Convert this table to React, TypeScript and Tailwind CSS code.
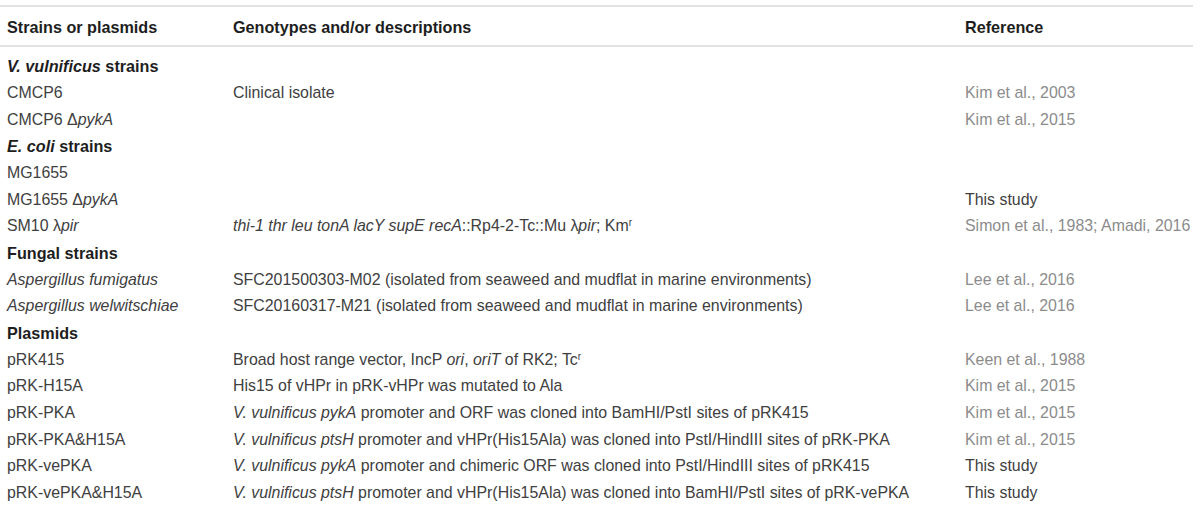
import type { ReactNode } from 'react';

type Row =
  | { kind: 'group'; label: ReactNode }
  | { kind: 'item'; name: ReactNode; desc?: ReactNode; ref?: string; refDark?: boolean };

const ROWS: Row[] = [
  { kind: 'group', label: <><i>V. vulnificus</i> strains</> },
  { kind: 'item', name: 'CMCP6', desc: 'Clinical isolate', ref: 'Kim et al., 2003' },
  { kind: 'item', name: <>CMCP6 Δ<i>pykA</i></>, ref: 'Kim et al., 2015' },
  { kind: 'group', label: <><i>E. coli</i> strains</> },
  { kind: 'item', name: 'MG1655' },
  { kind: 'item', name: <>MG1655 Δ<i>pykA</i></>, ref: 'This study', refDark: true },
  {
    kind: 'item',
    name: <>SM10 λ<i>pir</i></>,
    desc: (
      <>
        <i>thi-1 thr leu tonA lacY supE recA</i>::Rp4-2-Tc::Mu λ<i>pir</i>; Km<sup className="text-[10px]">r</sup>
      </>
    ),
    ref: 'Simon et al., 1983; Amadi, 2016',
  },
  { kind: 'group', label: 'Fungal strains' },
  {
    kind: 'item',
    name: <i>Aspergillus fumigatus</i>,
    desc: 'SFC201500303-M02 (isolated from seaweed and mudflat in marine environments)',
    ref: 'Lee et al., 2016',
  },
  {
    kind: 'item',
    name: <i>Aspergillus welwitschiae</i>,
    desc: 'SFC20160317-M21 (isolated from seaweed and mudflat in marine environments)',
    ref: 'Lee et al., 2016',
  },
  { kind: 'group', label: 'Plasmids' },
  {
    kind: 'item',
    name: 'pRK415',
    desc: (
      <>
        Broad host range vector, IncP <i>ori</i>, <i>oriT</i> of RK2; Tc<sup className="text-[10px]">r</sup>
      </>
    ),
    ref: 'Keen et al., 1988',
  },
  { kind: 'item', name: 'pRK-H15A', desc: 'His15 of vHPr in pRK-vHPr was mutated to Ala', ref: 'Kim et al., 2015' },
  {
    kind: 'item',
    name: 'pRK-PKA',
    desc: <><i>V. vulnificus pykA</i> promoter and ORF was cloned into BamHI/PstI sites of pRK415</>,
    ref: 'Kim et al., 2015',
  },
  {
    kind: 'item',
    name: 'pRK-PKA&H15A',
    desc: <><i>V. vulnificus ptsH</i> promoter and vHPr(His15Ala) was cloned into PstI/HindIII sites of pRK-PKA</>,
    ref: 'Kim et al., 2015',
  },
  {
    kind: 'item',
    name: 'pRK-vePKA',
    desc: <><i>V. vulnificus pykA</i> promoter and chimeric ORF was cloned into PstI/HindIII sites of pRK415</>,
    ref: 'This study',
    refDark: true,
  },
  {
    kind: 'item',
    name: 'pRK-vePKA&H15A',
    desc: <><i>V. vulnificus ptsH</i> promoter and vHPr(His15Ala) was cloned into BamHI/PstI sites of pRK-vePKA</>,
    ref: 'This study',
    refDark: true,
  },
];

const COLS = 'grid grid-cols-[226px_732px_1fr] pl-[7px]';

export default function App() {
  return (
    <div className="h-[508px] w-[1200px] bg-white pt-[5px] font-['Liberation_Sans',Arial,sans-serif] text-[15.9px] text-[#404040]">
      <div className="w-[1193px]">
        <div className={`${COLS} h-[42px] items-center border-y-2 border-[#e2e2e2] pt-[2px] text-[16.2px] font-bold text-[#1e1e1e]`}>
          <span>Strains or plasmids</span>
          <span>Genotypes and/or descriptions</span>
          <span>Reference</span>
        </div>
        <div className="pt-[6px]">
          {ROWS.map((row, i) =>
            row.kind === 'group' ? (
              <div key={i} className={`${COLS} h-[26.67px] items-center text-[16.2px] font-bold text-[#1e1e1e]`}>
                <span className="col-span-3">{row.label}</span>
              </div>
            ) : (
              <div key={i} className={`${COLS} h-[26.67px] items-center whitespace-nowrap`}>
                <span>{row.name}</span>
                <span>{row.desc}</span>
                <span className={row.refDark ? 'text-[#404040]' : 'text-[#8c8c8c]'}>{row.ref}</span>
              </div>
            ),
          )}
        </div>
      </div>
    </div>
  );
}
